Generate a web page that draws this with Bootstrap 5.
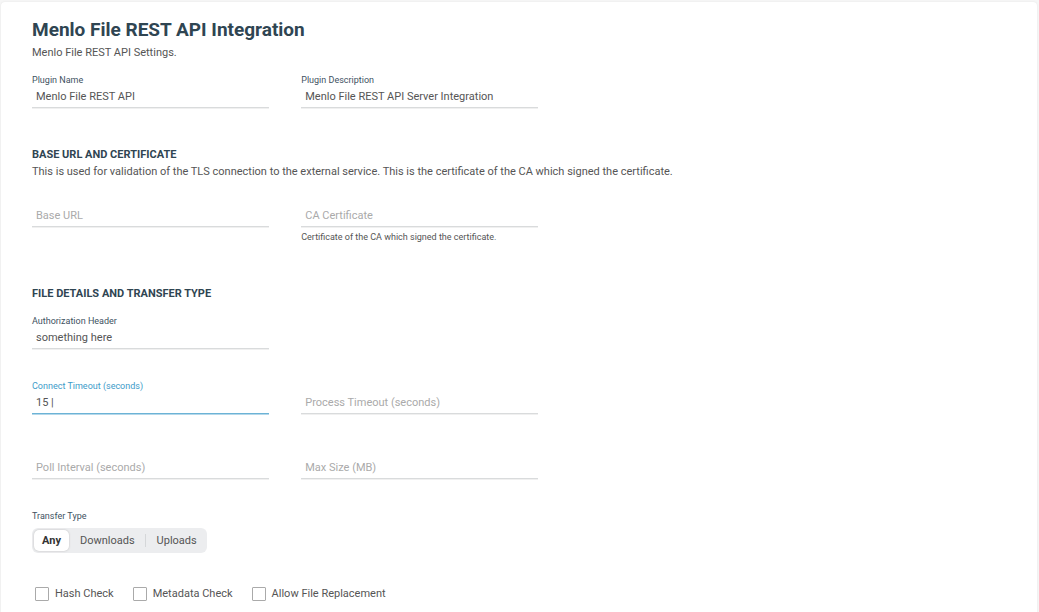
<!DOCTYPE html>
<html lang="en">
<head>
<meta charset="utf-8">
<meta name="viewport" content="width=device-width, initial-scale=1">
<title>Menlo File REST API Integration</title>
<link href="https://cdn.jsdelivr.net/npm/bootstrap@5.3.0/dist/css/bootstrap.min.css" rel="stylesheet">
<style>
  body { font-family: Roboto, "Liberation Sans", sans-serif; font-size: 11px; line-height: 16px; color: #555; background: #f6f6f6; }
  .panel { margin: 2px 2px 0 1px; padding: 16px 31px 0; min-height: calc(100vh - 2px); background: #fff; border-radius: 4px 4px 0 0; box-shadow: 0 0 2px #e2e2e2; }
  .page-title { font-size: 19px; line-height: 24px; font-weight: 700; color: #2f4552; margin: 0 0 3px; }
  .section-title { font-size: 11px; line-height: 16px; font-weight: 700; color: #2f4552; margin: 0 0 1px; }
  .field-grid { display: grid; grid-template-columns: 1fr 1fr; column-gap: 32px; row-gap: 30px; width: 52%; min-width: 320px; margin-top: 12px; }
  .field-label { display: block; font-size: 9px; line-height: 14px; color: #41525f; }
  .line-input { height: 21px; padding: 0 4px 2px; font-size: 11px; line-height: 18px; color: #555; background: transparent; border: 0; border-bottom: 1px solid #d9dbdc; box-shadow: 0 1px 0 #f0f0f0; border-radius: 0; transition: none; }
  .line-input:focus { box-shadow: none; background: transparent; border-color: #58a9d0; }
  .current .field-label { color: #3d9bc9; }
  .current .line-input { border-color: #6cb3d6; box-shadow: 0 1px 0 #b5d8ea; }
  /* the label rests on an empty line and moves above it once there is a value */
  .resting { display: grid; grid-template-rows: 14px 21px auto; }
  .resting .line-input { grid-area: 2 / 1; }
  .resting label { grid-area: 2 / 1; padding: 0 4px; line-height: 20px; color: #aaa; pointer-events: none; }
  .resting .line-input:not(:placeholder-shown) + label { grid-area: 1 / 1; padding: 0; font-size: 9px; line-height: 14px; color: #41525f; }
  .hint { grid-area: 3 / 1; font-size: 9px; line-height: 14px; margin-top: 3px; }
  .transfer-title { margin-top: 30px; margin-bottom: 5px; }
  .segments { height: 25px; padding: 2px; background: #ecedef; border-radius: 6px; }
  .segment { padding: 0 10px 0 11px; border: 0; border-radius: 5px; background: transparent; color: #555; font-size: 11px; line-height: 16px; }
  .segment.active { padding: 0 8px; background: #fff; color: #333; font-weight: 700; box-shadow: 0 0 2px #b8b8b8; }
  .segment:last-child { padding-right: 8px; }
  .divider { width: 1px; height: 13px; background: #d5d7d9; }
  .checks { gap: 19px; padding-left: 3px; margin-top: 33px; }
  .checks label { padding-left: 6px; }
  .tick { width: 14px; height: 14px; margin: 0; border: 1px solid #aaa; }
  .tick[type=checkbox] { border-radius: 1px; }
  .base-section { margin-top: 39px; }
  .details-section { margin-top: 42px; }
</style>
</head>
<body>
<main class="panel">
  <h1 class="page-title">Menlo File REST API Integration</h1>
  <p class="mb-0">Menlo File REST API Settings.</p>
  <form>
    <div class="field-grid">
      <div><label class="field-label" for="name">Plugin Name</label>
        <input class="form-control line-input" id="name" type="text" value="Menlo File REST API"></div>
      <div><label class="field-label" for="desc">Plugin Description</label>
        <input class="form-control line-input" id="desc" type="text" value="Menlo File REST API Server Integration"></div>
    </div>

    <section class="base-section">
      <h2 class="section-title">BASE URL AND CERTIFICATE</h2>
      <p class="mb-0">This is used for validation of the TLS connection to the external service. This is the certificate of the CA which signed the certificate.</p>
      <div class="field-grid">
        <div class="resting"><input class="form-control line-input" id="url" type="text" placeholder=" "><label for="url">Base URL</label></div>
        <div class="resting"><input class="form-control line-input" id="ca" type="text" placeholder=" " aria-describedby="ca-hint"><label for="ca">CA Certificate</label>
          <div class="hint" id="ca-hint">Certificate of the CA which signed the certificate.</div></div>
      </div>
    </section>

    <section class="details-section">
      <h2 class="section-title">FILE DETAILS AND TRANSFER TYPE</h2>
      <div class="field-grid">
        <div><label class="field-label" for="auth">Authorization Header</label>
          <input class="form-control line-input" id="auth" type="text" value="something here"></div>
        <div></div>
        <div class="current"><label class="field-label" for="connect">Connect Timeout (seconds)</label>
          <input class="form-control line-input" id="connect" type="text" value="15 |"></div>
        <div class="resting"><input class="form-control line-input" id="process" type="text" placeholder=" "><label for="process">Process Timeout (seconds)</label></div>
        <div class="resting"><input class="form-control line-input" id="poll" type="text" placeholder=" "><label for="poll">Poll Interval (seconds)</label></div>
        <div class="resting"><input class="form-control line-input" id="size" type="text" placeholder=" "><label for="size">Max Size (MB)</label></div>
      </div>
      <div class="field-label transfer-title" id="transfer">Transfer Type</div>
      <div class="segments d-inline-flex align-items-stretch align-top" role="group" aria-labelledby="transfer">
        <button type="button" class="segment active" aria-pressed="true">Any</button>
        <button type="button" class="segment">Downloads</button>
        <span class="divider align-self-center"></span>
        <button type="button" class="segment">Uploads</button>
      </div>
      <div class="checks d-flex flex-wrap">
        <div class="d-flex align-items-center"><input class="form-check-input tick" type="checkbox" id="hash"><label for="hash">Hash Check</label></div>
        <div class="d-flex align-items-center"><input class="form-check-input tick" type="checkbox" id="meta"><label for="meta">Metadata Check</label></div>
        <div class="d-flex align-items-center"><input class="form-check-input tick" type="checkbox" id="replace"><label for="replace">Allow File Replacement</label></div>
      </div>
    </section>
  </form>
</main>
<script src="https://cdn.jsdelivr.net/npm/bootstrap@5.3.0/dist/js/bootstrap.bundle.min.js"></script>
</body>
</html>
